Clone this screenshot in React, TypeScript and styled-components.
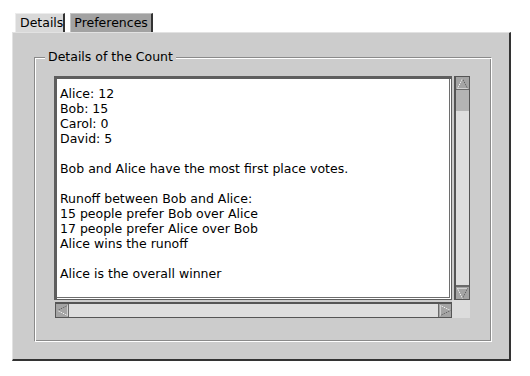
import React from "react";
import styled, { createGlobalStyle } from "styled-components";

const Global = createGlobalStyle`
  html, body { margin: 0; padding: 0; background: #ffffff; }
  body { font-family: "DejaVu Sans", "Liberation Sans", sans-serif; font-size: 12.5px; color: #000; }
`;

const Window = styled.div`
  padding: 13px 0 0 12px;
`;

const TabRow = styled.div`
  display: flex;
  gap: 5px;
  margin-left: 3px;
  height: 19px;
`;

const Tab = styled.div<{ $active?: boolean }>`
  box-sizing: border-box;
  height: 19px;
  line-height: 18px;
  padding: 0 ${(p) => (p.$active ? "0" : "3px")} 0 ${(p) => (p.$active ? "4px" : "3px")};
  background: ${(p) => (p.$active ? "#d9d9d9" : "#a2a2a2")};
  border-top: 1px solid ${(p) => (p.$active ? "#ececec" : "#c4c4c4")};
  border-left: 1px solid ${(p) => (p.$active ? "#ececec" : "#c4c4c4")};
  border-right: 2px solid #333333;
  white-space: nowrap;
`;

const Panel = styled.div`
  box-sizing: border-box;
  width: 499px;
  height: 329px;
  background: #cccccc;
  border-top: 1px solid #e2e2e2;
  border-left: 1px solid #e2e2e2;
  border-right: 2px solid #333333;
  border-bottom: 2px solid #333333;
  padding: 24px 0 0 21px;
`;

const Group = styled.div`
  position: relative;
  box-sizing: border-box;
  width: 458px;
  height: 285px;
  border-top: 1px solid #8a8a8a;
  border-left: 1px solid #8a8a8a;
  border-right: 1px solid #ffffff;
  border-bottom: 1px solid #ffffff;
  box-shadow: inset 1px 1px 0 #ffffff, inset -1px -1px 0 #8a8a8a;
  padding: 18px 0 0 19px;
`;

const Legend = styled.span`
  position: absolute;
  top: -9px;
  left: 10px;
  padding: 0 3px;
  background: #cccccc;
  line-height: 15px;
  white-space: nowrap;
`;

const ScrollArea = styled.div`
  display: grid;
  grid-template-columns: 398px 18px;
  grid-template-rows: 224px 18px;
`;

const TextBox = styled.div`
  box-sizing: border-box;
  background: #ffffff;
  border: 1px solid #5e5e5e;
  box-shadow: inset 2px 2px 0 #5e5e5e, inset -1px -1px 0 #ffffff, inset -2px -2px 0 #6e6e6e;
  padding: 9px 4px 0 5px;
  line-height: 15px;
  white-space: pre;
  overflow: hidden;
`;

const Line = styled.div`
  height: 15px;
`;

const VScroll = styled.div`
  box-sizing: border-box;
  margin-left: 2px;
  width: 16px;
  display: flex;
  flex-direction: column;
  border: 1px solid #555555;
  border-left-width: 2px;
  background: #b4b4b4;
`;

const HScroll = styled.div`
  box-sizing: border-box;
  margin-top: 2px;
  margin-left: 1px;
  height: 16px;
  display: flex;
  border: 1px solid #555555;
  border-top-width: 2px;
  background: #dedede;
`;

const ArrowButton = styled.div<{ $horizontal?: boolean }>`
  flex: none;
  width: ${(p) => (p.$horizontal ? "12px" : "auto")};
  height: ${(p) => (p.$horizontal ? "auto" : "12px")};
  background: #a4a4a4;
  display: flex;
  align-items: center;
  justify-content: center;
  ${(p) => (p.$horizontal ? "border-right: 1px solid #6a6a6a;" : "border-bottom: 1px solid #6a6a6a;")}
  &:last-child {
    ${(p) => (p.$horizontal ? "border-right: none; border-left: 1px solid #6a6a6a;" : "border-bottom: none; border-top: 1px solid #6a6a6a;")}
  }
`;

const Trough = styled.div`
  flex: 1;
  display: flex;
  flex-direction: column;
  padding-top: 21px;
  background: #b4b4b4;
`;

const Thumb = styled.div<{ $horizontal?: boolean }>`
  flex: 1;
  background: #dedede;
  ${(p) => (p.$horizontal ? "" : "border-bottom: 1px solid #6a6a6a;")}
`;

const Corner = styled.div`
  background: #dcdcdc;
`;

type Dir = "up" | "down" | "left" | "right";

const Arrow: React.FC<{ dir: Dir }> = ({ dir }) => {
  const pts: Record<Dir, [number, number][]> = {
    up: [[5.5, 0.5], [10.5, 10.5], [0.5, 10.5]],
    down: [[0.5, 0.5], [10.5, 0.5], [5.5, 10.5]],
    left: [[0.5, 5.5], [10.5, 0.5], [10.5, 10.5]],
    right: [[0.5, 0.5], [10.5, 5.5], [0.5, 10.5]],
  };
  const p = pts[dir];
  const seg = (a: [number, number], b: [number, number], c: string, k: number) => (
    <line key={k} x1={a[0]} y1={a[1]} x2={b[0]} y2={b[1]} stroke={c} strokeWidth={1} strokeDasharray="1 1" />
  );
  return (
    <svg width="11" height="11" viewBox="0 0 11 11">
      {seg(p[0], p[1], dir === "up" || dir === "left" ? "#5a5a5a" : "#ffffff", 0)}
      {seg(p[1], p[2], dir === "up" || dir === "left" ? "#ffffff" : "#5a5a5a", 1)}
      {seg(p[2], p[0], "#ffffff", 2)}
    </svg>
  );
};

const lines = [
  "Alice: 12",
  "Bob: 15",
  "Carol: 0",
  "David: 5",
  "",
  "Bob and Alice have the most first place votes.",
  "",
  "Runoff between Bob and Alice:",
  "15 people prefer Bob over Alice",
  "17 people prefer Alice over Bob",
  "Alice wins the runoff",
  "",
  "Alice is the overall winner",
];

export default function App() {
  return (
    <>
      <Global />
      <Window>
        <TabRow>
          <Tab $active>Details</Tab>
          <Tab>Preferences</Tab>
        </TabRow>
        <Panel>
          <Group>
            <Legend>Details of the Count</Legend>
            <ScrollArea>
              <TextBox>
                {lines.map((l, i) => (
                  <Line key={i}>{l}</Line>
                ))}
              </TextBox>
              <VScroll>
                <ArrowButton>
                  <Arrow dir="up" />
                </ArrowButton>
                <Trough>
                  <Thumb />
                </Trough>
                <ArrowButton>
                  <Arrow dir="down" />
                </ArrowButton>
              </VScroll>
              <HScroll>
                <ArrowButton $horizontal>
                  <Arrow dir="left" />
                </ArrowButton>
                <Thumb $horizontal />
                <ArrowButton $horizontal>
                  <Arrow dir="right" />
                </ArrowButton>
              </HScroll>
              <Corner />
            </ScrollArea>
          </Group>
        </Panel>
      </Window>
    </>
  );
}
